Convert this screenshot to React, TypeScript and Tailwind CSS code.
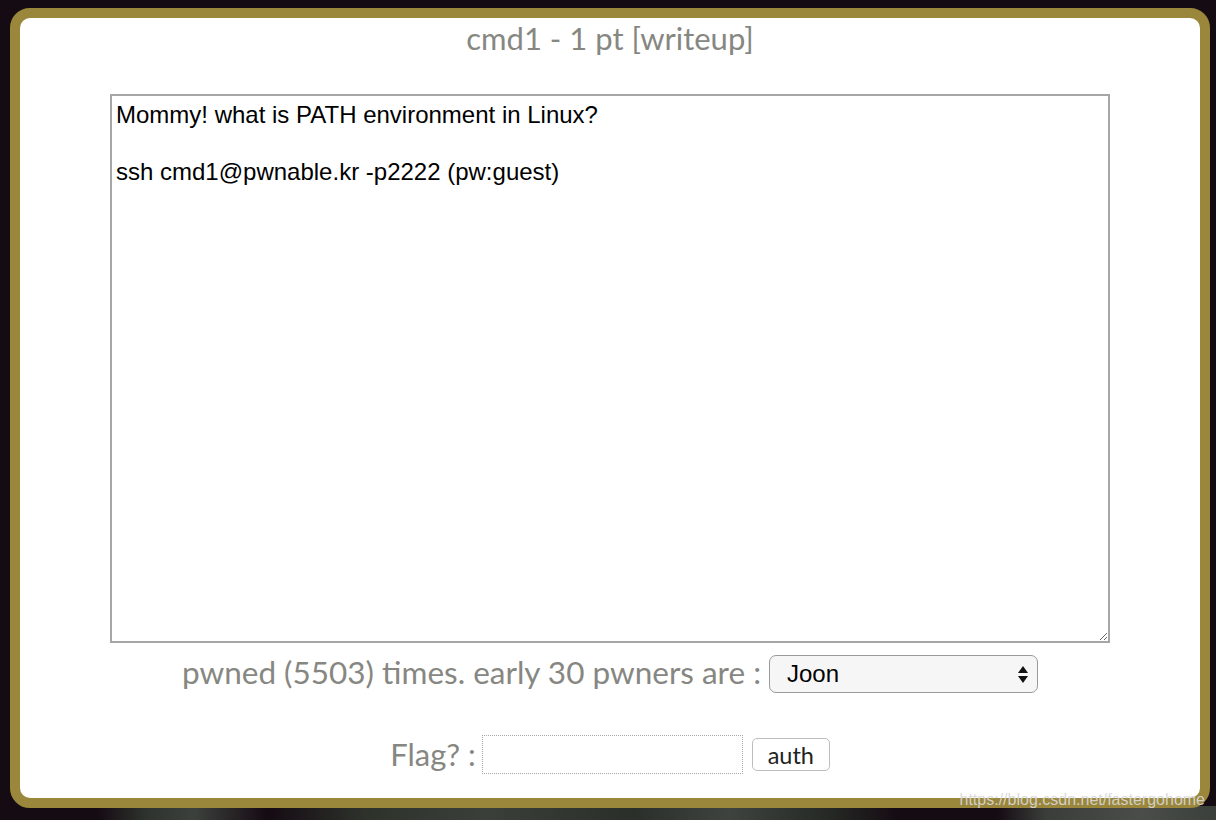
import React from "react";

export default function App() {
  return (
    <div
      className="relative w-[1216px] h-[820px] overflow-hidden bg-[#150b13] pl-[10px] pt-[8px]"
      style={{ fontFamily: "Lato, 'Noto Sans', sans-serif" }}
    >
      {/* background imagery hint at the bottom */}
      <div className="absolute left-0 bottom-0 w-full h-[14px] bg-[linear-gradient(90deg,#150b13_0%,#150b13_8%,#2e332e_12%,#3c403c_16%,#150b13_22%,#2d322b_30%,#3a3f3a_40%,#2b2f2a_52%,#3f433f_60%,#262a25_68%,#150b13_74%,#150b13_82%,#3a3e3a_86%,#4a4d4a_94%,#3a3f3a_100%)]" />
      <div className="relative w-[1200px] h-[800px] rounded-[20px] border-[10px] border-[#9b873b] bg-white flex flex-col items-center">
        <h1 className="mt-[2px] text-[31px] leading-[37px] text-[#878782] font-normal">
          cmd1 - 1 pt [writeup]
        </h1>
        <textarea
          className="mt-[37px] w-[1000px] h-[549px] border-2 border-[#a6a6a6] px-[4px] pt-[5px] text-[24px] leading-[28.5px] text-black outline-none"
          style={{ fontFamily: "'Liberation Sans', Arial, sans-serif" }}
          defaultValue={"Mommy! what is PATH environment in Linux?\n\nssh cmd1@pwnable.kr -p2222 (pw:guest)"}
        />
        <div className="mt-[12px] h-[38px] flex items-center gap-[8px]">
          <span className="pb-[5px] text-[31.5px] leading-[28px] text-[#878782]">
            pwned (5503) times. early 30 pwners are :
          </span>
          <div className="relative w-[269px] h-[38px]">
            <select
              className="appearance-none w-full h-full rounded-[7px] border border-[#9a9a9a] bg-[#f6f6f6] pl-[17px] text-[24px] text-black outline-none"
              style={{ fontFamily: "'Liberation Sans', Arial, sans-serif" }}
              defaultValue="Joon"
            >
              <option>Joon</option>
            </select>
            <svg
              className="absolute right-[9px] top-[10px] pointer-events-none"
              width="12"
              height="19"
              viewBox="0 0 12 19"
            >
              <path d="M6 1 L11 8 L1 8 Z" fill="#111" />
              <path d="M1 11 L11 11 L6 18 Z" fill="#111" />
            </svg>
          </div>
        </div>
        <div className="mt-[42px] h-[39px] flex items-center">
          <span className="text-[31px] leading-[37px] text-[#878782]">Flag? :</span>
          <input
            className="ml-[6px] w-[261px] h-[39px] border border-dotted border-[#a8a8a8] bg-white outline-none"
            type="text"
          />
          <button className="ml-[9px] w-[78px] h-[33px] rounded-[5px] border border-[#bdbdbd] bg-white text-[23.5px] leading-[28px] text-[#222]">
            auth
          </button>
        </div>
      </div>
      <div
        className="absolute right-[11px] top-[790px] text-[16px] leading-[19px] text-[rgba(215,215,215,0.92)]"
        style={{ fontFamily: "'Liberation Sans', Arial, sans-serif" }}
      >
        https://blog.csdn.net/fastergohome
      </div>
    </div>
  );
}
